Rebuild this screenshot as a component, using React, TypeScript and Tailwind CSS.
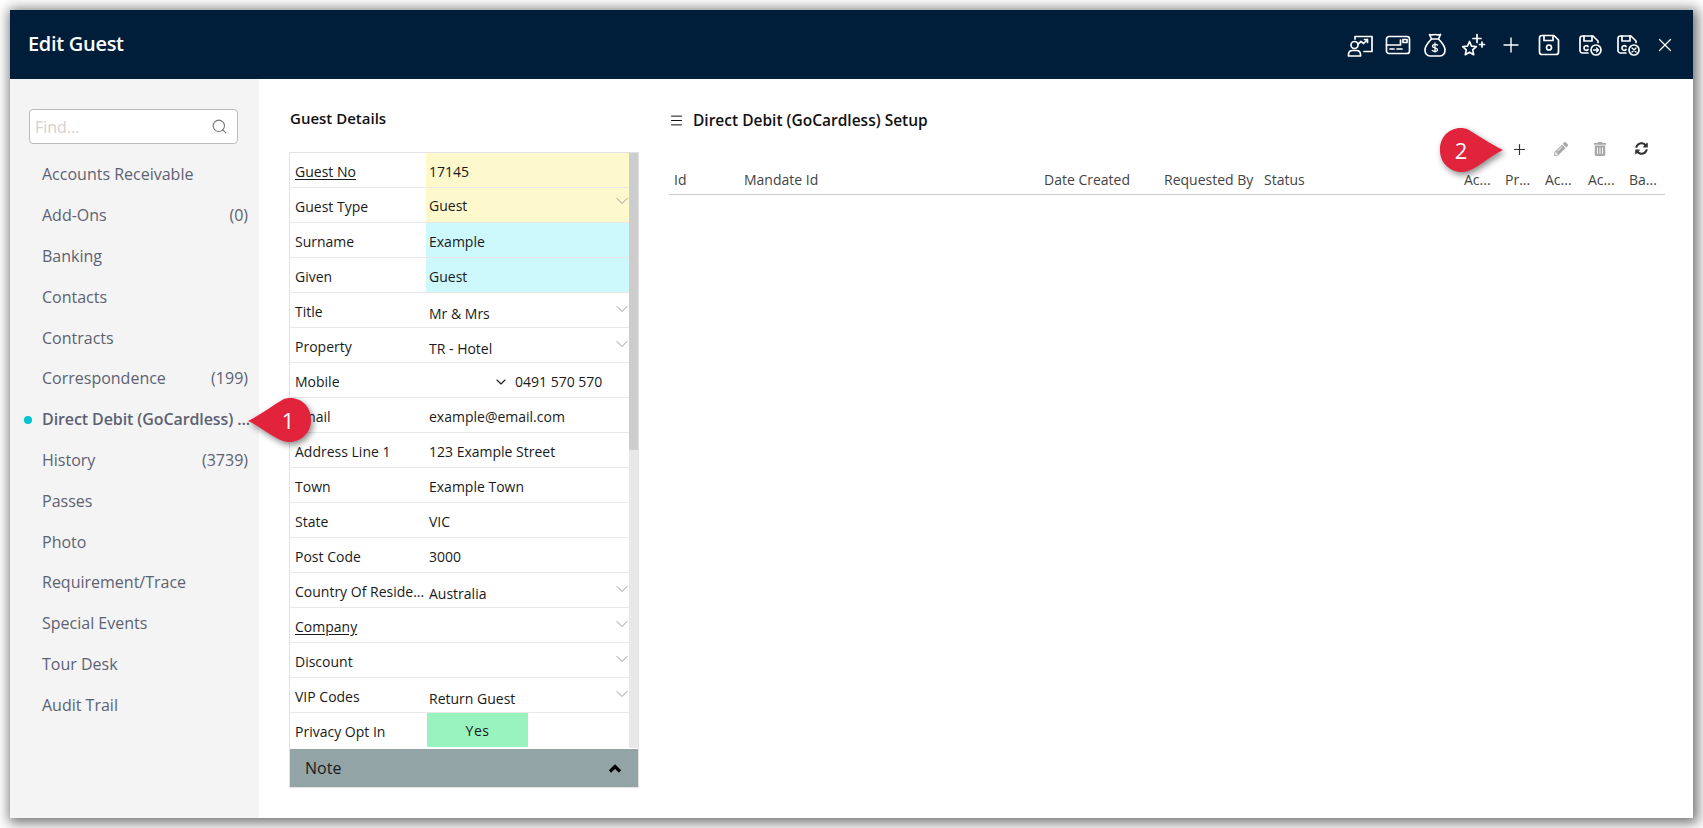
import React from "react";
import { Plus, X, Search, ChevronDown, Menu } from "lucide-react";
import { FaPencilAlt, FaTrashAlt, FaSyncAlt } from "react-icons/fa";

const nav: [string, string?][] = [
  ["Accounts Receivable"], ["Add-Ons", "(0)"], ["Banking"], ["Contacts"], ["Contracts"],
  ["Correspondence", "(199)"], ["Direct Debit (GoCardless) ..."], ["History", "(3739)"], ["Passes"], ["Photo"],
  ["Requirement/Trace"], ["Special Events"], ["Tour Desk"], ["Audit Trail"],
];

type Row = { label: string; value?: string; link?: boolean; bg?: string; drop?: boolean; };
const rows: Row[] = [
  { label: "Guest No", value: "17145", link: true, bg: "bg-[#fef8cd]" },
  { label: "Guest Type", value: "Guest", bg: "bg-[#fef8cd]", drop: true },
  { label: "Surname", value: "Example", bg: "bg-[#cdf8fc]" },
  { label: "Given", value: "Guest", bg: "bg-[#cdf8fc]" },
  { label: "Title", value: "Mr & Mrs", drop: true },
  { label: "Property", value: "TR - Hotel", drop: true },
  { label: "Mobile" },
  { label: "Email", value: "example@email.com" },
  { label: "Address Line 1", value: "123 Example Street" },
  { label: "Town", value: "Example Town" },
  { label: "State", value: "VIC" },
  { label: "Post Code", value: "3000" },
  { label: "Country Of Reside...", value: "Australia", drop: true },
  { label: "Company", link: true, drop: true },
  { label: "Discount", drop: true },
  { label: "VIP Codes", value: "Return Guest", drop: true },
];

const S = (p: { children: React.ReactNode; w?: number }) => (
  <svg width={p.w ?? 26} height="26" viewBox="0 0 26 26" fill="none" stroke="currentColor" strokeWidth="1.7" strokeLinecap="round" strokeLinejoin="round">{p.children}</svg>
);

const floppy = "M3 6.5a2.5 2.5 0 0 1 2.5-2.5H16l5 5v1.5M3 6.5v12A2.5 2.5 0 0 0 5.500 21H11";

function HeaderIcons() {
  return (
    <div className="flex items-center text-white">
      <span className="mr-[12px]"><S>
        <path d="M8 7V4.500h17v15h-8" /><path d="M11 12l3-2.500 2.500 2 4-4m0 0h-3m3 0v3" />
        <circle cx="7.500" cy="13" r="3.500" /><path d="M1.500 24v-2a4 4 0 0 1 4-3.500h4a4 4 0 0 1 4 3.500v2z" />
      </S></span>
      <span className="mr-[11px]"><S>
        <rect x="1.500" y="4.500" width="23" height="17" rx="2.500" /><path d="M1.500 13h14V8" /><rect x="18" y="7.500" width="4" height="3" /><path d="M5 17h4M12 17h5" />
      </S></span>
      <span className="mr-[12px]"><S>
        <path d="M9.500 7 7.500 2.500c2 1 3.500 0 5.500 0s3.500 1 5.500 0L16.500 7z" /><path d="M9.500 7c-3 3-6.500 7-6.500 11 0 3.500 2 6 5 6h10c3 0 5-2.500 5-6 0-4-3.500-8-6.500-11" />
        <path d="M15.500 13c-1-1-5-1-5 1.200s5 1.300 5 3.500-4 2-5.200.8M13 11v9" strokeWidth="1.3" />
      </S></span>
      <span className="mr-[13px]"><S>
        <path d="M9.500 9.500l2 4.600 4.800.5-3.600 3.200 1 4.900-4.200-2.500L5.300 22.700l1-4.900L2.700 14.600l4.800-.5z" /><path d="M17 2.500v8M13 6.500h8M22 10v5M19.500 12.500h5" />
      </S></span>
      <span className="mr-[13px]"><Plus size={24} strokeWidth={1.4} /></span>
      <span className="mr-[15px]"><S>
        <path d="M3.500 6a2.500 2.500 0 0 1 2.500-2.500h12l4.500 4.500v12a2.500 2.500 0 0 1-2.500 2.500H6A2.500 2.500 0 0 1 3.500 20z" /><path d="M8 3.500v5h9v-5" /><circle cx="13" cy="15.500" r="2.500" />
      </S></span>
      <span className="mr-[12px]"><S>
        <path d={floppy} /><path d="M7 4v5h8V4" /><path d="M11 14.500c-1-1.500-4-1-4 1.500s3 3 4 1.500" />
        <circle cx="19" cy="18" r="5" /><path d="M16.500 18h5m-2-2 2 2-2 2" strokeWidth="1.3" />
      </S></span>
      <span className="mr-[13px]"><S>
        <path d={floppy} /><path d="M7 4v5h8V4" /><path d="M11 14.500c-1-1.500-4-1-4 1.500s3 3 4 1.500" />
        <circle cx="19" cy="18" r="5" /><path d="M17 16l4 4m0-4-4 4" strokeWidth="1.3" />
      </S></span>
      <X size={22} strokeWidth={1.4} />
    </div>
  );
}

function Callout({ n, dir, className }: { n: string; dir: "l" | "r"; className: string }) {
  return (
    <div className={`absolute w-[66px] h-[48px] flex items-center ${className}`}>
      <svg className="absolute inset-0 drop-shadow-[2px_3px_3px_rgba(0,0,0,0.45)]" width="66" height="48" viewBox="0 0 66 48">
        {dir === "l"
          ? <path d="M1 25 C15 18 25 10 36 3.500 C45 -1 64 4 64 24 C64 42 46 49 36 45 C25 41 14 31 1 25Z" fill="#e1233c" />
          : <path d="M65 24 C51 17 41 10 30 3.500 C21 -1 2 4 2 24 C2 42 20 49 30 45 C41 41 52 30 65 24Z" fill="#e1233c" />}
      </svg>
      <span className={`relative text-white text-[22px] w-[44px] text-center ${dir === "l" ? "ml-[19px]" : "ml-[1px]"}`}>{n}</span>
    </div>
  );
}

export default function App() {
  return (
    <div className="relative w-[1703px] h-[828px] overflow-hidden bg-white p-[10px] font-['Open_Sans','Noto_Sans',sans-serif]">
      <div className="relative h-[808px] flex flex-col bg-white shadow-[2px_2px_12px_3px_rgba(0,0,0,0.55)]">
        <header className="h-[69px] shrink-0 bg-[#001d3a] flex items-center justify-between pl-[18px] pr-[17px]">
          <h1 className="text-white text-[20px] font-semibold tracking-[-0.3px] -mt-[1px]">Edit Guest</h1>
          <HeaderIcons />
        </header>
        <div className="flex flex-1 min-h-0">
          <aside className="w-[249px] shrink-0 bg-[#f4f4f4] pt-[30px]">
            <div className="ml-[19px] mr-[21px] h-[35px] flex items-center justify-between rounded-[4px] border border-[#bbbbbb] bg-white pl-[5px] pr-[9px] text-[#d4d0d0] text-[16px]">
              <span>Find...</span>
              <Search size={17} strokeWidth={1.5} className="text-[#777777]" />
            </div>
            <nav className="mt-[10px]">
              {nav.map(([t, c], i) => (
                <div key={t} className="relative h-[40.8px] flex items-center justify-between pl-[32px] pr-[11px] text-[16px] text-[#5d6272] whitespace-nowrap">
                  {i === 6 && <span className="absolute left-[14px] top-[17px] w-[8px] h-[8px] rounded-full bg-[#00c3d0]" />}
                  <span className={i === 6 ? "font-semibold tracking-[-0.1px]" : ""}>{t}</span>
                  {c && <span>{c}</span>}
                </div>
              ))}
            </nav>
          </aside>

          <section className="w-[350px] ml-[30px] shrink-0">
            <h2 className="pt-[28px] h-[73px] pl-[1px] text-[15px] font-semibold text-[#111]">Guest Details</h2>
            <div className="border border-[#e2e2e2] w-[350px]">
              <div className="flex">
                <div className="w-[339px]">
                  {rows.map((r) => (
                    <div key={r.label} className="flex h-[35px] border-b border-[#e8e8e8] text-[14px] text-[#1a1a1a]">
                      <div className="w-[136px] pl-[5px] pt-[8px] whitespace-nowrap">
                        <span className={r.link ? "underline underline-offset-2" : ""}>{r.label}</span>
                      </div>
                      <div className={`relative flex-1 pl-[3px] ${r.drop ? (r.label === "Guest Type" ? "pt-[7px]" : "pt-[10px]") : "pt-[8px]"} ${r.bg ?? ""}`}>
                        {r.label === "Mobile" ? (
                          <div className="flex items-center pl-[64px]">
                            <ChevronDown size={16} strokeWidth={1.6} />
                            <span className="ml-[6px]">0491 570 570</span>
                          </div>
                        ) : r.value}
                        {r.drop && <ChevronDown size={20} strokeWidth={1.2} className={`absolute right-[-3px] text-[#999] ${r.label === "Guest Type" ? "top-[3px]" : "top-[6px]"}`} />}
                      </div>
                    </div>
                  ))}
                  <div className="flex h-[35px] text-[14px] text-[#1a1a1a]">
                    <div className="w-[136px] pl-[5px] pt-[8px]">Privacy Opt In</div>
                    <div className="w-[101px] ml-[1px] h-[34px] bg-[#99f3bf] flex items-center justify-center tracking-[0.5px]">Yes</div>
                  </div>
                </div>
                <div className="w-[9px] bg-[#e8e8e8]"><div className="h-[297px] bg-[#cdcdcd]" /></div>
              </div>
              <div className="h-[38px] mt-[1px] bg-[#92a4a6] flex items-center justify-between pl-[15px] pr-[16px] text-[16px] text-[#1a1a1a]">
                <span className="-mt-[1px]">Note</span>
                <svg width="14" height="10" viewBox="0 0 14 10" fill="none" stroke="#000" strokeWidth="3.200"><path d="M2 8.500 7 3.500l5 5" /></svg>
              </div>
            </div>
          </section>

          <section className="ml-[30px] w-[996px] shrink-0">
            <div className="pt-[29px] flex items-center h-[54px] text-[15.5px] font-semibold text-[#111]">
              <Menu size={15} strokeWidth={1.6} />
              <span className="ml-[9px]">Direct Debit (GoCardless) Setup</span>
            </div>
            <div className="h-[33px] pt-[8px] flex text-[#333]">
              <span className="ml-[829px] w-[43px] flex justify-center"><Plus size={17} strokeWidth={1.6} /></span>
              <span className="w-[39px] flex justify-center pt-[1px] text-[#a8a8a8]"><FaPencilAlt size={14} /></span>
              <span className="w-[40px] flex justify-center pt-[1px] text-[#a8a8a8]"><FaTrashAlt size={14} /></span>
              <span className="w-[42px] flex justify-center pt-[1px]"><FaSyncAlt size={13} /></span>
            </div>
            <div className="flex h-[29px] pb-[2px] items-center border-b border-[#cccccc] text-[14px] text-[#444]">
              <span className="w-[75px] pl-[5px]">Id</span>
              <span className="w-[300px]">Mandate Id</span>
              <span className="w-[120px]">Date Created</span>
              <span className="w-[100px]">Requested By</span>
              <span className="w-[200px]">Status</span>
              <span className="w-[41px]">Ac...</span>
              <span className="w-[40px]">Pr...</span>
              <span className="w-[43px]">Ac...</span>
              <span className="w-[41px]">Ac...</span>
              <span>Ba...</span>
            </div>
          </section>
        </div>
      </div>
      <Callout n="1" dir="l" className="left-[247px] top-[396px]" />
      <Callout n="2" dir="r" className="left-[1438px] top-[126px]" />
    </div>
  );
}
